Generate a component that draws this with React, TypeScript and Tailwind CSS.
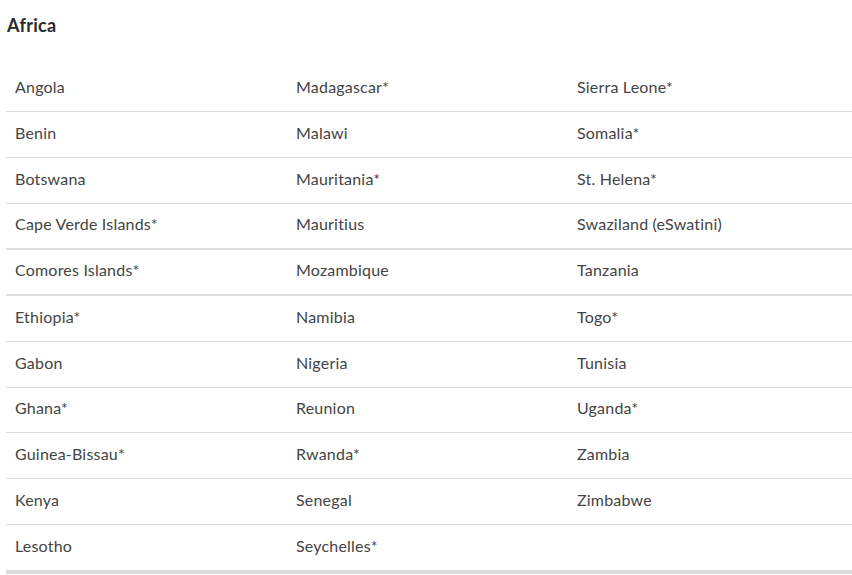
const rows: string[][] = [
  ['Angola', 'Madagascar*', 'Sierra Leone*'],
  ['Benin', 'Malawi', 'Somalia*'],
  ['Botswana', 'Mauritania*', 'St. Helena*'],
  ['Cape Verde Islands*', 'Mauritius', 'Swaziland (eSwatini)'],
  ['Comores Islands*', 'Mozambique', 'Tanzania'],
  ['Ethiopia*', 'Namibia', 'Togo*'],
  ['Gabon', 'Nigeria', 'Tunisia'],
  ['Ghana*', 'Reunion', 'Uganda*'],
  ['Guinea-Bissau*', 'Rwanda*', 'Zambia'],
  ['Kenya', 'Senegal', 'Zimbabwe'],
  ['Lesotho', 'Seychelles*', ''],
];

export default function App() {
  return (
    <div className="w-[852px] h-[575px] overflow-hidden bg-white font-['Lato','Liberation_Sans',sans-serif] text-[#444]">
      <h2 className="pl-[7px] pt-[14px] h-[66px] text-[18px] font-bold leading-[22px] tracking-[0.3px] text-[#2b2b2b]">
        Africa
      </h2>
      <div className="ml-[6px] flex flex-col">
        {rows.map((row, i) => (
          <div
            key={i}
            className={
              'flex items-center pb-[4px] ' +
              (i === 3 || i === 4
                ? 'h-[46px] border-b-2 border-[#dcdcdc]'
                : i === 7
                  ? 'h-[45px] border-b border-[#dcdcdc]'
                  : i === rows.length - 1
                    ? 'h-[49px] border-b-4 border-[#dcdcdc]'
                    : 'h-[46px] border-b border-[#dcdcdc]')
            }
          >
            {row.map((name, j) => (
              <div key={j} className="w-[281px] pl-[9px] text-[16px] leading-[20px] tracking-[0.2px]">
                {name}
              </div>
            ))}
          </div>
        ))}
      </div>
    </div>
  );
}
